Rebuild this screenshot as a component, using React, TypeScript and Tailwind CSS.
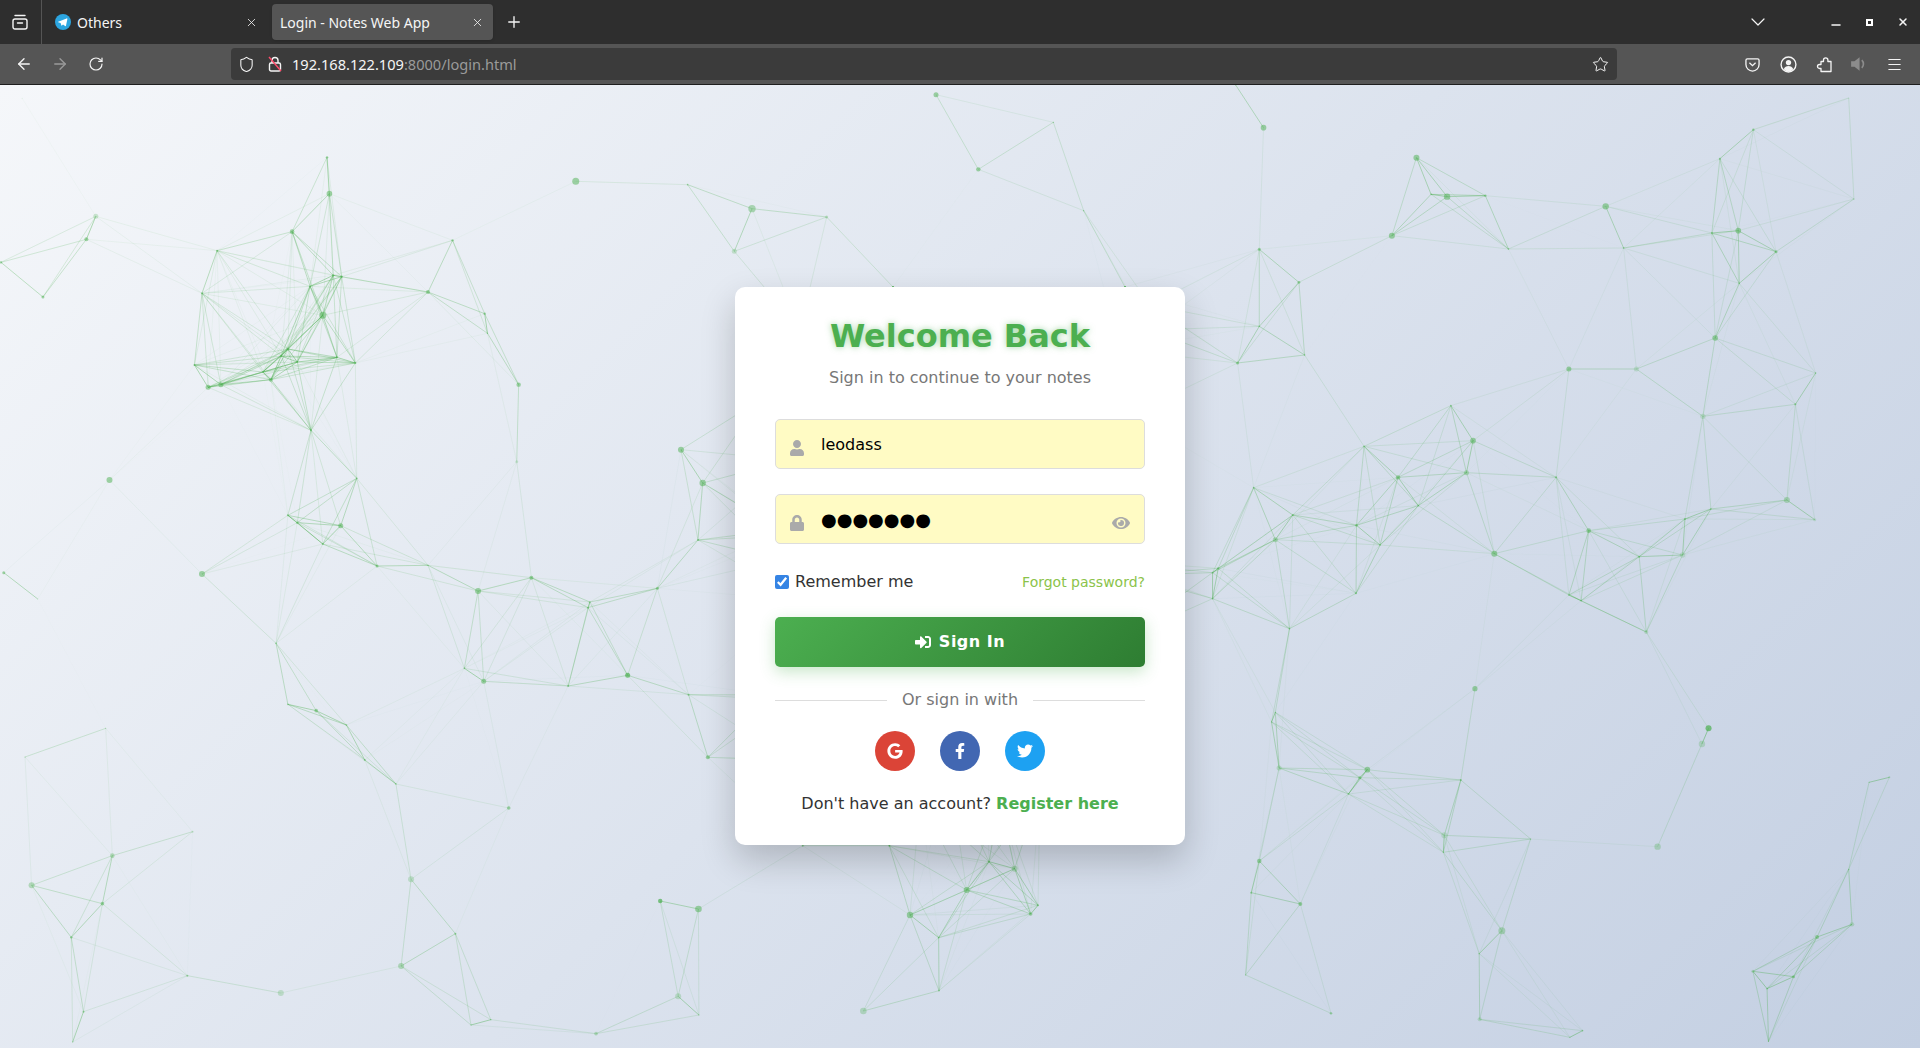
import React, { useMemo } from 'react'
import { ArrowLeft, ArrowRight, ChevronDown, Menu, Minus, Plus, RotateCw, Shield, Star, X } from 'lucide-react'
import { FaEye, FaFacebookF, FaGoogle, FaLock, FaSignInAlt, FaTwitter, FaUser } from 'react-icons/fa'

type Pt = [number, number, number, number?]

// nodes were read off crops, so x is squeezed by sx and y is 3x
const fromCrop = (ox: number, oy: number, sx: number, pts: Pt[]): Pt[] =>
  pts.map(([x, y, r, a]) => [ox + x / sx, oy + y / 3, r, a ?? 0.5])

const NODES: Pt[] = [
  ...fromCrop(0, 85, 2.119, [
    [47, 40, 0.5, 0.15], [203, 394, 2.5, 0.25], [183, 463, 2], [2, 532, 1.2], [91, 636, 1.5], [460, 497, 1], [619, 440, 2.3], [693, 217, 1.2],
    [698, 326, 2.8], [959, 466, 1.2], [1220, 289, 3.5], [1457, 299, 0.8], [1556, 499, 2.5, 0.25], [428, 625, 1], [706, 571, 1.2], [724, 575, 1.2],
    [657, 604, 0.8], [907, 621, 2], [684, 691, 3.5], [1027, 686, 1.2], [1033, 745, 0.7], [412, 840, 1], [610, 792, 1.5], [596, 813, 1], [630, 831, 1],
    [714, 817, 1], [753, 834, 1], [557, 861, 0.8], [574, 884, 2], [441, 907, 2.5], [468, 899, 2.5], [1099, 899, 2.2], [659, 1036, 1], [232, 1185, 3],
    [1095, 1130, 1.5, 0.2], [1443, 1094, 3], [1489, 1194, 3.2], [756, 1180, 0.8], [610, 1291, 1], [630, 1313, 1.2], [722, 1322, 2.5], [684, 1377, 1],
    [799, 1443, 1.5], [907, 1441, 0.7], [1479, 1365, 1], [1126, 1478, 2], [428, 1467, 3], [8, 1463, 1.5],
  ]),
  ...fromCrop(0, 560, 2.119, [
    [80, 117, 0.5, 0.2], [1013, 93, 3], [1250, 126, 0.8], [1246, 143, 1], [1393, 85, 1.5], [585, 250, 0.8], [984, 325, 0.8], [1025, 364, 2.5],
    [1204, 378, 1], [1330, 346, 2.5, 0.7], [1459, 404, 1], [1500, 592, 2], [610, 433, 0.8], [670, 452, 1.8], [734, 495, 0.8], [773, 600, 1], [839, 672, 0.8],
    [1078, 744, 1.8], [224, 505, 0.5], [53, 591, 0.5], [408, 815, 1, 0.25], [238, 887, 2.3, 0.35], [67, 976, 3, 0.35], [217, 1031, 1.8], [871, 958, 3, 0.25],
    [151, 1132, 1.2], [965, 1121, 1], [850, 1218, 3, 0.35], [397, 1247, 1], [595, 1299, 3, 0.25], [177, 1355, 1], [154, 1446, 0.6], [1399, 1023, 2.2, 0.7],
    [1480, 1047, 3.3], [998, 1395, 0.6], [1040, 1379, 0.7], [1263, 1421, 1.8, 0.35], [1437, 1309, 3, 0.25], [1481, 1365, 0.6],
  ]),
  ...fromCrop(1180, 85, 2.119, [
    [118, 0, 0.5], [177, 128, 2.8], [501, 218, 3], [532, 328, 0.8], [566, 335, 3.2], [647, 332, 1.2], [449, 452, 3], [696, 492, 0.8], [902, 364, 3.2],
    [940, 489, 0.8], [1144, 221, 1], [1215, 134, 1.2], [1417, 39, 0.5, 0.2], [1428, 342, 0.6], [1127, 444, 1], [1183, 437, 2.8], [1263, 500, 1.5], [1185, 595, 0.8],
    [168, 493, 1.5], [252, 592, 1.4], [168, 724, 0.8], [264, 810, 0.8], [122, 834, 1.5], [1134, 759, 2.8], [824, 852, 2.5], [967, 852, 2.5, 0.2], [1347, 864, 0.7],
    [1304, 958, 1], [1108, 994, 2.7, 0.2], [574, 962, 0.8], [621, 1067, 2.8], [390, 1084, 0.8], [607, 1163, 2.5, 0.35], [462, 1177, 2.2], [797, 1177, 1], [505, 1262, 0.8],
    [156, 1208, 0.8], [239, 1290, 1], [374, 1321, 1.3], [424, 1380, 0.8], [202, 1364, 2.5, 0.35], [81, 1450, 1.2], [69, 1463, 0.8], [666, 1406, 3], [866, 1337, 2.3],
    [973, 1415, 1], [1065, 1410, 2.8, 0.2], [1070, 1302, 1], [1125, 1272, 0.8], [1286, 1245, 3, 0.35], [1345, 1304, 1.5, 0.2],
  ]),
  ...fromCrop(1180, 560, 2.119, [
    [69, 116, 0.8], [373, 100, 1], [232, 206, 0.8], [824, 105, 0.8], [850, 122, 0.8], [988, 216, 2, 0.25], [625, 386, 2.6], [1120, 505, 3, 0.7], [1106, 552, 3.2, 0.25],
    [202, 457, 0.6], [194, 486, 0.6], [210, 624, 2.5, 0.25], [397, 629, 2.8], [381, 653, 1.5], [595, 660, 1], [357, 702, 0.8], [560, 826, 3, 0.2], [558, 877, 0.6],
    [743, 837, 0.6], [1012, 860, 3.2, 0.3], [1460, 667, 0.5], [1503, 652, 1, 0.3], [168, 903, 2.2], [1417, 928, 0.7], [151, 998, 1], [255, 1032, 2], [682, 1112, 3.5, 0.35],
    [1424, 1093, 2.2, 0.25], [1350, 1131, 2], [634, 1181, 0.7], [1214, 1234, 1.5, 0.3], [1300, 1250, 1.5], [1244, 1286, 0.8], [139, 1245, 0.6], [320, 1360, 1.2],
    [635, 1378, 2, 0.25], [853, 1412, 0.8], [826, 1432, 0.5], [1247, 1444, 0.6],
  ]),
  ...fromCrop(700, 85, 3, [[708, 29, 2.5], [1060, 112, 0.7], [835, 253, 2.2], [1151, 377, 0.6], [156, 371, 3.7, 0.4], [380, 396, 1.5, 0.3]]),
  ...fromCrop(700, 840, 3, [
    [308, 17, 1], [568, 17, 1], [867, 65, 1], [944, 86, 3, 0.3], [800, 150, 3], [1014, 196, 1], [992, 222, 1.8], [630, 225, 3.2], [716, 293, 0.8], [717, 452, 0.8], [490, 513, 3.3, 0.3],
  ]),
  // these sit under the card, only their lines show
  [950, 780, 1], [1000, 800, 1], [1040, 790, 1], [920, 800, 1], [880, 770, 1], [985, 735, 1],
  [800, 600, 1], [790, 700, 1], [770, 695, 1], [790, 760, 1], [760, 400, 1], [790, 460, 1], [780, 530, 1], [790, 535, 1], [780, 560, 1],
  [1120, 350, 1], [1130, 415, 1], [1150, 305, 1], [1100, 560, 1], [1130, 575, 1], [1120, 640, 1], [1150, 330, 1], [800, 330, 1], [893, 287, 1], [1125, 287, 1],
]

function Network() {
  const lines = useMemo(() => {
    const out: { x1: number; y1: number; x2: number; y2: number; o: number }[] = []
    NODES.forEach((a, i) => {
      for (let j = i + 1; j < NODES.length; j++) {
        const b = NODES[j]
        const d = Math.hypot(a[0] - b[0], a[1] - b[1])
        if (d < 150) out.push({ x1: a[0], y1: a[1], x2: b[0], y2: b[1], o: (1 - d / 150) * 0.5 })
      }
    })
    return out
  }, [])

  return (
    <svg className="absolute inset-0 w-full h-full" viewBox="0 85 1920 963">
      {lines.map((l, i) => (
        <line key={i} x1={l.x1} y1={l.y1} x2={l.x2} y2={l.y2} stroke="#4caf50" strokeWidth="1" strokeOpacity={l.o} />
      ))}
      {NODES.map((n, i) => (
        <circle key={i} cx={n[0]} cy={n[1]} r={n[2]} fill="#4caf50" fillOpacity={n[3]} />
      ))}
    </svg>
  )
}

function BrowserChrome() {
  return (
    <div className="shrink-0 font-['Noto_Sans',sans-serif] text-[#f5f5f5]">
      <div className="h-[44px] bg-[#2e2e2e] flex items-center">
        <div className="w-[42px] h-[44px] flex items-center justify-center border-r border-[#555] pr-[2px]">
          <svg width="16" height="16" viewBox="0 0 16 16" fill="none" stroke="#f5f5f5" strokeWidth="1.4">
            <rect x="1" y="5" width="14" height="10" rx="2" />
            <path d="M3 1.500h10M5.500 9h5" strokeLinecap="round" />
          </svg>
        </div>
        <div className="w-[230px] flex items-center pl-[13px] pr-[14px]">
          <svg width="16" height="16" viewBox="0 0 16 16">
            <circle cx="8" cy="8" r="8" fill="#2ca5e0" />
            <path d="M3.200 7.800l8.400-3.400c.5-.2.9.1.8.7l-1.400 6.600c-.1.5-.5.6-.9.4L8 10.600l-1.100 1c-.2.2-.4.2-.5-.1l-.8-2.500-2.300-.7c-.5-.2-.5-.4-.1-.5z" fill="#fff" />
          </svg>
          <span className="ml-[6px] text-[14px] flex-1">Others</span>
          <X size={13} strokeWidth={1.5} />
        </div>
        <div className="w-[221px] h-[36px] rounded-[4px] bg-[#555] flex items-center pl-[8px] pr-[9px] shadow-sm">
          <span className="text-[14px] flex-1">Login - Notes Web App</span>
          <X size={13} strokeWidth={1.5} />
        </div>
        <Plus size={18} strokeWidth={1.8} className="ml-[12px]" />
        <ChevronDown size={24} strokeWidth={1.2} className="ml-auto mr-[59px]" />
        <Minus size={14} strokeWidth={2.2} className="mr-[23px] mt-[6px]" />
        <div className="w-[7px] h-[7px] border-2 border-white mr-[24px]" />
        <X size={12} strokeWidth={3} className="mr-[11px]" />
      </div>
      <div className="h-[41px] bg-[#555] border-b border-[#1e1e1e] flex items-center">
        <ArrowLeft size={18} strokeWidth={1.8} className="ml-[15px]" />
        <ArrowRight size={18} strokeWidth={1.8} className="ml-[18px] text-[#9a9a9a]" />
        <RotateCw size={16} strokeWidth={1.8} className="ml-[19px]" />
        <div className="ml-[127px] w-[1386px] h-[32px] rounded-[4px] bg-[#3b3b3b] flex items-center pl-[7px] pr-[8px]">
          <Shield size={17} strokeWidth={1.5} />
          <div className="ml-[13px] w-[14px] h-[16px]">
            <svg width="14" height="16" viewBox="0 0 14 16" fill="none" stroke="#f5f5f5" strokeWidth="1.4">
              <rect x="1.500" y="7" width="11" height="8" rx="1.500" />
              <path d="M4 7V4.500a3 3 0 016 0V7" />
              <path d="M1 1l12 14" stroke="#ff4a6a" />
            </svg>
          </div>
          <span className="ml-[10px] mt-[1px] text-[14.6px] flex-1">
            192.168.122.109<span className="text-[#9a9a9a]">:8000/login.html</span>
          </span>
          <Star size={17} strokeWidth={1.4} />
        </div>
        <svg className="ml-[128px]" width="15" height="15" viewBox="0 0 16 16" fill="none" stroke="#f5f5f5" strokeWidth="1.4">
          <path d="M2.500 2h11A1.500 1.500 0 0115 3.500V8a7 7 0 01-14 0V3.500A1.500 1.500 0 012.500 2z" />
          <path d="M5 6.500l3 2.800 3-2.800" strokeLinecap="round" />
        </svg>
        <svg className="ml-[20px]" width="17" height="17" viewBox="0 0 16 16" fill="none" stroke="#f5f5f5" strokeWidth="1.300">
          <circle cx="8" cy="8" r="7" />
          <circle cx="8" cy="6.200" r="2.500" fill="#f5f5f5" stroke="none" />
          <path d="M3.500 12.500c.8-2 2.500-3 4.500-3s3.700 1 4.500 3A6.800 6.800 0 018 14.800a6.800 6.800 0 01-4.500-2.300z" fill="#f5f5f5" stroke="none" />
        </svg>
        <svg className="ml-[19px]" width="16" height="17" viewBox="0 0 16 16" fill="none" stroke="#f5f5f5" strokeWidth="1.300" strokeLinejoin="round">
          <path d="M15 15H5v-3H3.500a2 2 0 010-4H5V5h2.500V3.500a2.200 2.200 0 014.400 0V5H15z" />
        </svg>
        <svg className="ml-[18px] text-[#8c8c8c]" width="18" height="18" viewBox="0 0 16 16" fill="currentColor">
          <path d="M1 5.500h3L8.500 2v12L4 10.500H1z" />
          <path d="M10.500 4.500a5 5 0 010 7" fill="none" stroke="currentColor" strokeWidth="1.500" />
        </svg>
        <Menu size={17} strokeWidth={1.6} className="ml-[18px]" />
      </div>
    </div>
  )
}

export default function App() {
  return (
    <div className="h-[1048px] flex flex-col overflow-hidden">
      <BrowserChrome />
      <div className="relative flex-1 flex items-center justify-center overflow-hidden bg-[linear-gradient(135deg,#f5f7fa_0%,#c3cfe2_100%)] font-['DejaVu_Sans',sans-serif]">
        <Network />
        <div className="relative mb-[1px] w-[450px] h-[558px] bg-white rounded-[10px] px-[40px] pt-[25px] shadow-[0_15px_35px_rgba(0,0,0,0.2)]">
          <h1 className="text-[32px] leading-[48px] font-bold text-center text-[#4caf50] [text-shadow:0_0_6px_rgba(76,175,80,0.5)]">Welcome Back</h1>
          <p className="mt-[6px] text-[16px] leading-[24px] text-center text-[#777]">Sign in to continue to your notes</p>

          <div className="relative mt-[29px]">
            <FaUser size={16} className="absolute left-[14px] top-[21px] text-[#aaa]" />
            <input readOnly value="leodass" className="w-full h-[50px] rounded-[5px] border border-[#ddd] bg-[#fffbc4] pl-[45px] text-[16px] text-black outline-none" />
          </div>
          <div className="relative mt-[25px]">
            <FaLock size={16} className="absolute left-[14px] top-[21px] text-[#aaa]" />
            <input readOnly value="●●●●●●●" className="w-full h-[50px] rounded-[5px] border border-[#ddd] bg-[#fffbc4] pl-[45px] text-[18px] text-black outline-none" />
            <FaEye size={18} className="absolute right-[15px] top-[20px] text-[#aaa]" />
          </div>

          <div className="mt-[26px] flex items-center justify-between">
            <label className="flex items-center text-[16px] leading-[24px] text-[#333]">
              <input type="checkbox" checked readOnly className="w-[14px] h-[14px] mr-[6px] accent-[#3584e4]" />
              Remember me
            </label>
            <a className="text-[14px] text-[#8bc34a]">Forgot password?</a>
          </div>

          <button className="mt-[23px] w-full h-[50px] rounded-[5px] bg-[linear-gradient(135deg,#4caf50,#2e7d32)] text-white text-[16px] font-bold tracking-[0.5px] flex items-center justify-center gap-[8px] shadow-[0_5px_15px_rgba(76,175,80,0.3)]">
            <FaSignInAlt size={16} />
            Sign In
          </button>

          <div className="mt-[21px] flex items-center gap-[15px] text-[16px] leading-[24px] text-[#777]">
            <div className="flex-1 h-px bg-[#ddd]" />
            Or sign in with
            <div className="flex-1 h-px bg-[#ddd]" />
          </div>

          <div className="mt-[19px] flex justify-center gap-[25px]">
            <div className="w-[40px] h-[40px] rounded-full bg-[#db4437] text-white flex items-center justify-center"><FaGoogle size={16} /></div>
            <div className="w-[40px] h-[40px] rounded-full bg-[#4267b2] text-white flex items-center justify-center"><FaFacebookF size={16} /></div>
            <div className="w-[40px] h-[40px] rounded-full bg-[#1da1f2] text-white flex items-center justify-center"><FaTwitter size={16} /></div>
          </div>

          <p className="mt-[21px] text-center text-[16px] leading-[24px] text-[#333]">
            Don't have an account? <a className="font-bold text-[#4caf50]">Register here</a>
          </p>
        </div>
      </div>
    </div>
  )
}
